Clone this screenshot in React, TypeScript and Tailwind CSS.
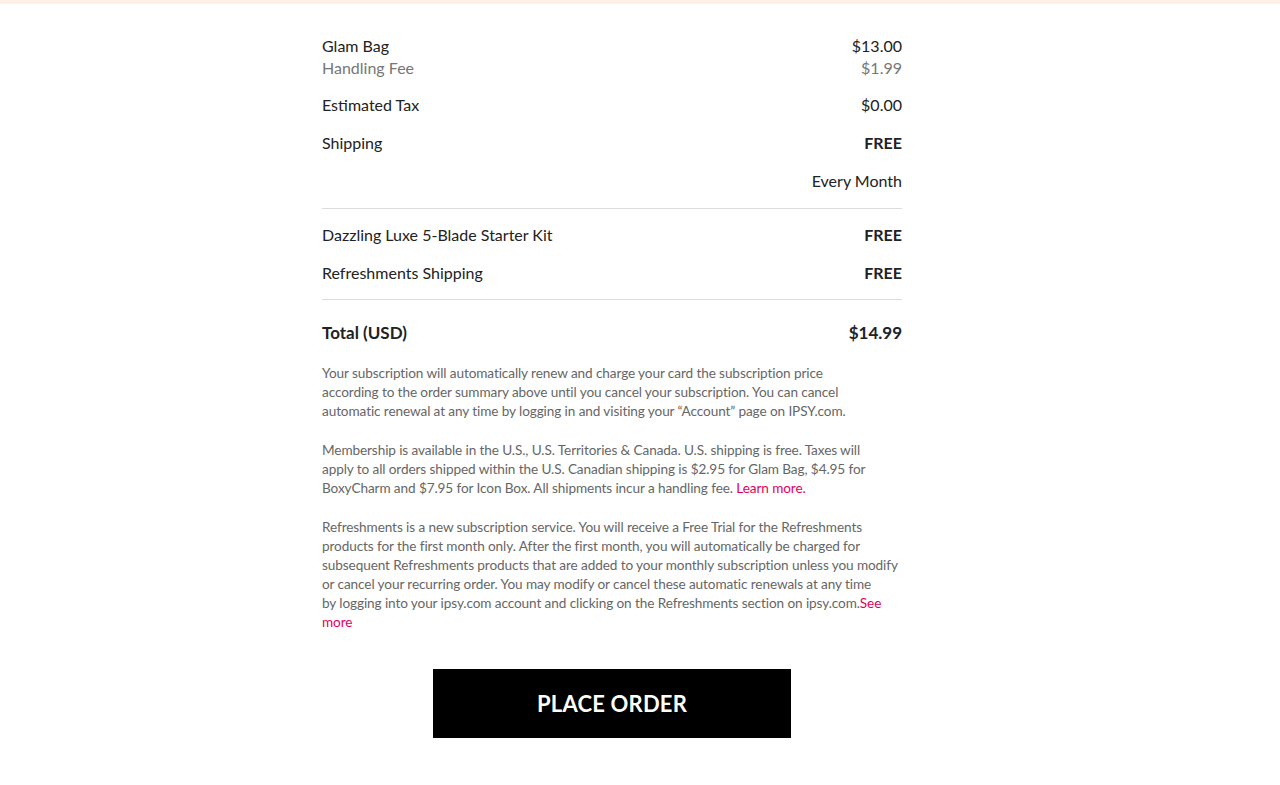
import React from "react";

const font = { fontFamily: "Lato, 'Noto Sans', sans-serif" };

function Row({
  label,
  value,
  bold,
}: {
  label?: string;
  value: string;
  bold?: boolean;
}) {
  return (
    <div className="flex items-center justify-between h-[22px]">
      <span className="text-[16px] text-[#222]">{label}</span>
      <span className={bold ? "text-[16px] font-bold text-[#222]" : "text-[16px] text-[#222]"}>
        {value}
      </span>
    </div>
  );
}

export default function App() {
  return (
    <div className="min-h-[785px] bg-white" style={font}>
      <div className="h-[4px] bg-[#fdf0e5]" />

      <div className="ml-[322px] w-[580px] pt-[31px]">
        {/* bag + handling */}
        <div>
          <Row label="Glam Bag" value="$13.00" />
          <div className="flex items-center justify-between h-[22px] text-[16px] text-[#767676]">
            <span>Handling Fee</span>
            <span>$1.99</span>
          </div>
        </div>

        <div className="mt-[15px] flex flex-col gap-[16px]">
          <Row label="Estimated Tax" value="$0.00" />
          <Row label="Shipping" value="FREE" bold />
          <Row value="Every Month" />
        </div>

        <div className="mt-[16px] mb-[15px] border-t border-[#dcdcdc]" />

        <div className="flex flex-col gap-[16px]">
          <Row label="Dazzling Luxe 5-Blade Starter Kit" value="FREE" bold />
          <Row label="Refreshments Shipping" value="FREE" bold />
        </div>

        <div className="mt-[15px] mb-[22px] border-t border-[#dcdcdc]" />

        <div className="flex items-center justify-between h-[22px] text-[17px] font-bold text-[#222]">
          <span>Total (USD)</span>
          <span>$14.99</span>
        </div>

        {/* legal copy, lines broken as in the design */}
        <div className="mt-[20px] flex flex-col gap-[20px] text-[13.6px] leading-[19px] tracking-[-0.1px] text-[#666]">
          <p>
            Your subscription will automatically renew and charge your card the subscription price
            <br />
            according to the order summary above until you cancel your subscription. You can cancel
            <br />
            automatic renewal at any time by logging in and visiting your “Account” page on IPSY.com.
          </p>
          <p>
            Membership is available in the U.S., U.S. Territories &amp; Canada. U.S. shipping is free. Taxes will
            <br />
            apply to all orders shipped within the U.S. Canadian shipping is $2.95 for Glam Bag, $4.95 for
            <br />
            BoxyCharm and $7.95 for Icon Box. All shipments incur a handling fee.{" "}
            <a className="text-[#e3005d]">Learn more.</a>
          </p>
          <p>
            Refreshments is a new subscription service. You will receive a Free Trial for the Refreshments
            <br />
            products for the first month only. After the first month, you will automatically be charged for
            <br />
            subsequent Refreshments products that are added to your monthly subscription unless you modify
            <br />
            or cancel your recurring order. You may modify or cancel these automatic renewals at any time
            <br />
            by logging into your ipsy.com account and clicking on the Refreshments section on ipsy.com.
            <a className="text-[#e3005d]">See</a>
            <br />
            <a className="text-[#e3005d]">more</a>
          </p>
        </div>

        <div className="mt-[37px] flex justify-center">
          <button className="w-[358px] h-[69px] bg-black text-white text-[22px] font-bold tracking-[0.2px]">
            PLACE ORDER
          </button>
        </div>
      </div>
    </div>
  );
}
